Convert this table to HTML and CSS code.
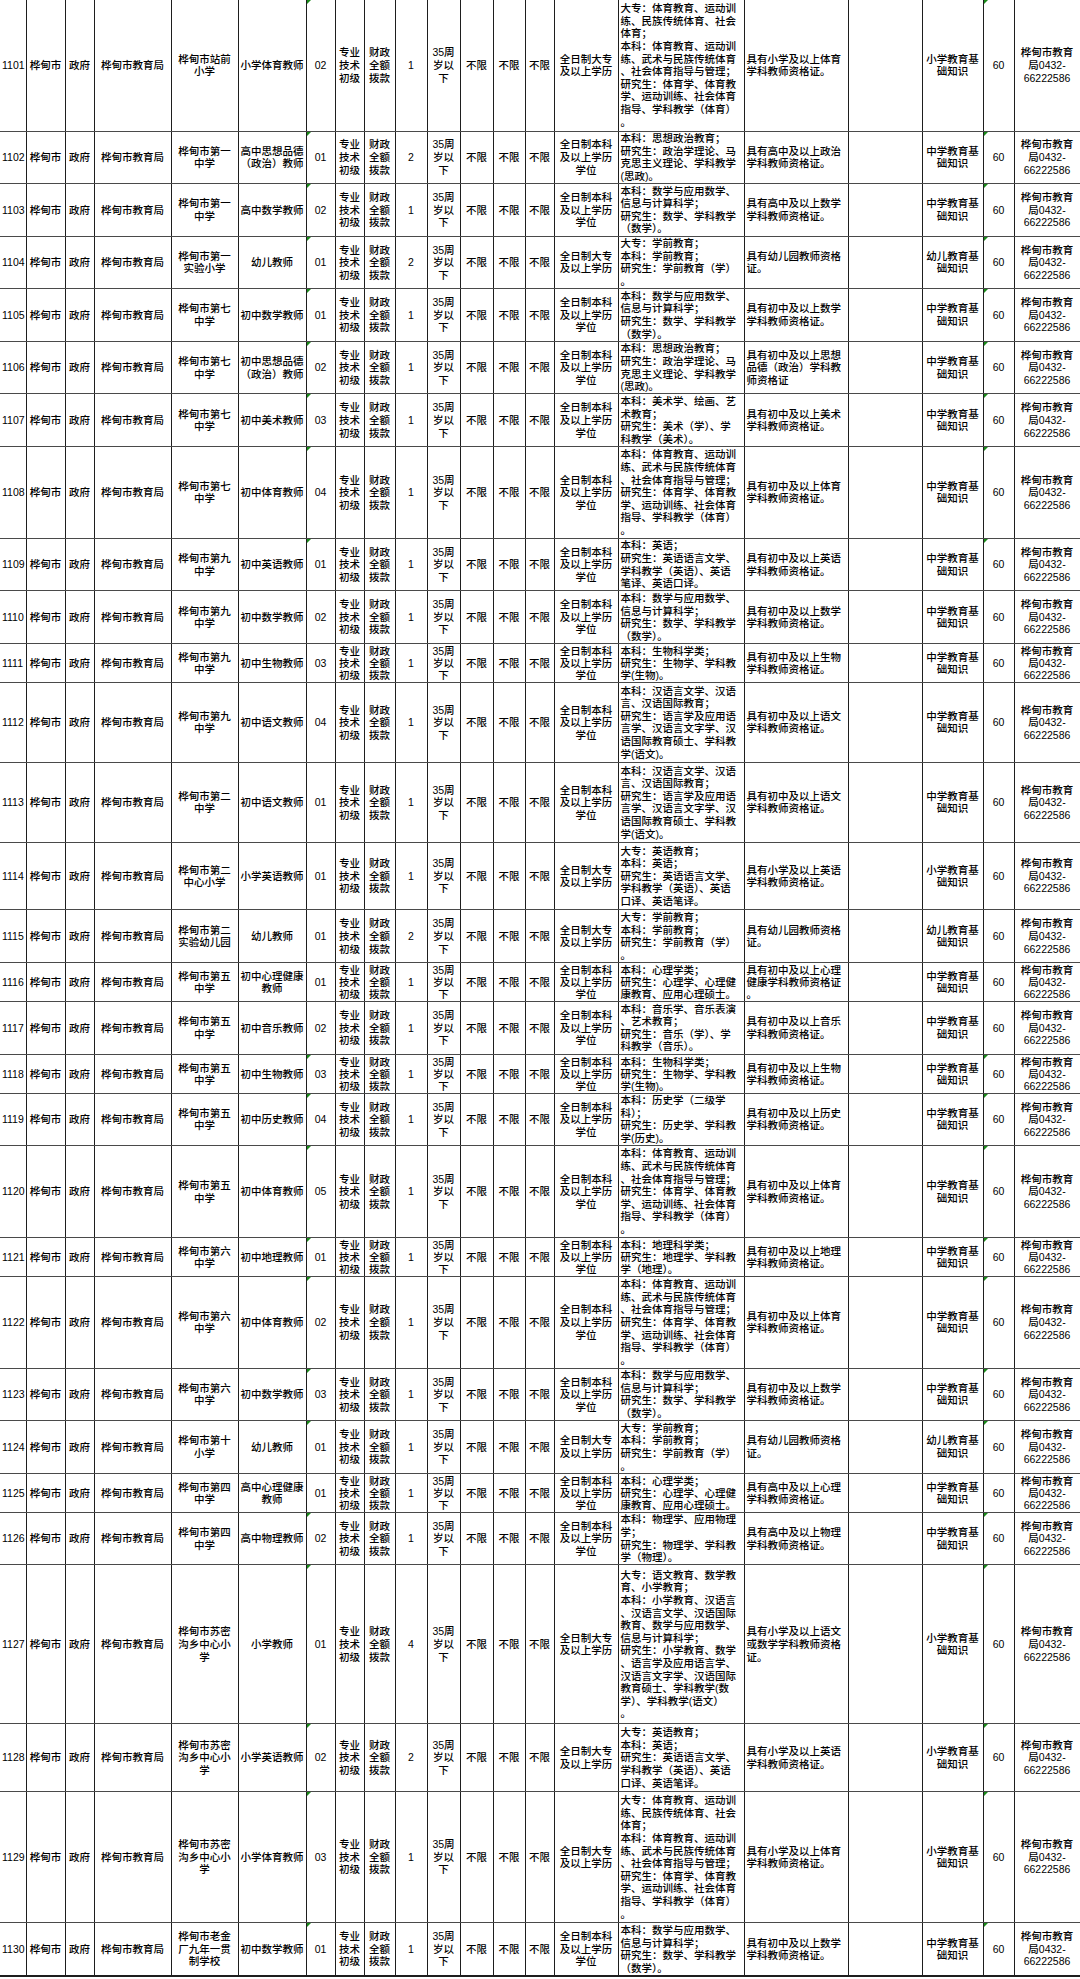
FILE: index.html
```html
<!DOCTYPE html>
<html lang="zh-CN">
<head>
<meta charset="utf-8">
<title>桦甸市教育局招聘岗位</title>
<link rel="stylesheet" href="styles.css">
</head>
<body>
<table class="jobs">
<colgroup>
<col class="w26"><col class="w39"><col class="w29"><col class="w77"><col class="w67"><col class="w68"><col class="w29"><col class="w29"><col class="w31"><col class="w32"><col class="w33"><col class="w33"><col class="w32"><col class="w29"><col class="w64"><col class="w126"><col class="w104"><col class="w74"><col class="w61"><col class="w31"><col class="w66">
</colgroup>
<tbody>
<tr class="r10"><td class="id">1101</td><td>桦甸市</td><td>政府</td><td>桦甸市教育局</td><td>桦甸市站前<br>小学</td><td>小学体育教师</td><td class="g">02</td><td>专业<br>技术<br>初级</td><td>财政<br>全额<br>拨款</td><td>1</td><td>35周<br>岁以<br>下</td><td>不限</td><td>不限</td><td>不限</td><td>全日制大专<br>及以上学历</td><td class="l">大专：体育教育、运动训<br>练、民族传统体育、社会<br>体育；<br>本科：体育教育、运动训<br>练、武术与民族传统体育<br>、社会体育指导与管理；<br>研究生：体育学、体育教<br>学、运动训练、社会体育<br>指导、学科教学（体育）<br>。</td><td class="l">具有小学及以上体育<br>学科教师资格证。</td><td></td><td>小学教育基<br>础知识</td><td class="g">60</td><td>桦甸市教育<br>局0432-<br>66222586</td></tr>
<tr class="r4"><td class="id">1102</td><td>桦甸市</td><td>政府</td><td>桦甸市教育局</td><td>桦甸市第一<br>中学</td><td>高中思想品德<br>（政治）教师</td><td class="g">01</td><td>专业<br>技术<br>初级</td><td>财政<br>全额<br>拨款</td><td>2</td><td>35周<br>岁以<br>下</td><td>不限</td><td>不限</td><td>不限</td><td>全日制本科<br>及以上学历<br>学位</td><td class="l">本科：思想政治教育；<br>研究生：政治学理论、马<br>克思主义理论、学科教学<br>(思政)。</td><td class="l">具有高中及以上政治<br>学科教师资格证。</td><td></td><td>中学教育基<br>础知识</td><td class="g">60</td><td>桦甸市教育<br>局0432-<br>66222586</td></tr>
<tr class="r4"><td class="id">1103</td><td>桦甸市</td><td>政府</td><td>桦甸市教育局</td><td>桦甸市第一<br>中学</td><td>高中数学教师</td><td class="g">02</td><td>专业<br>技术<br>初级</td><td>财政<br>全额<br>拨款</td><td>1</td><td>35周<br>岁以<br>下</td><td>不限</td><td>不限</td><td>不限</td><td>全日制本科<br>及以上学历<br>学位</td><td class="l">本科：数学与应用数学、<br>信息与计算科学；<br>研究生：数学、学科教学<br>（数学）。</td><td class="l">具有高中及以上数学<br>学科教师资格证。</td><td></td><td>中学教育基<br>础知识</td><td class="g">60</td><td>桦甸市教育<br>局0432-<br>66222586</td></tr>
<tr class="r4"><td class="id">1104</td><td>桦甸市</td><td>政府</td><td>桦甸市教育局</td><td>桦甸市第一<br>实验小学</td><td>幼儿教师</td><td class="g">01</td><td>专业<br>技术<br>初级</td><td>财政<br>全额<br>拨款</td><td>2</td><td>35周<br>岁以<br>下</td><td>不限</td><td>不限</td><td>不限</td><td>全日制大专<br>及以上学历</td><td class="l">大专：学前教育；<br>本科：学前教育；<br>研究生：学前教育（学）<br>。</td><td class="l">具有幼儿园教师资格<br>证。</td><td></td><td>幼儿教育基<br>础知识</td><td class="g">60</td><td>桦甸市教育<br>局0432-<br>66222586</td></tr>
<tr class="r4"><td class="id">1105</td><td>桦甸市</td><td>政府</td><td>桦甸市教育局</td><td>桦甸市第七<br>中学</td><td>初中数学教师</td><td class="g">01</td><td>专业<br>技术<br>初级</td><td>财政<br>全额<br>拨款</td><td>1</td><td>35周<br>岁以<br>下</td><td>不限</td><td>不限</td><td>不限</td><td>全日制本科<br>及以上学历<br>学位</td><td class="l">本科：数学与应用数学、<br>信息与计算科学；<br>研究生：数学、学科教学<br>（数学）。</td><td class="l">具有初中及以上数学<br>学科教师资格证。</td><td></td><td>中学教育基<br>础知识</td><td class="g">60</td><td>桦甸市教育<br>局0432-<br>66222586</td></tr>
<tr class="r4"><td class="id">1106</td><td>桦甸市</td><td>政府</td><td>桦甸市教育局</td><td>桦甸市第七<br>中学</td><td>初中思想品德<br>（政治）教师</td><td class="g">02</td><td>专业<br>技术<br>初级</td><td>财政<br>全额<br>拨款</td><td>1</td><td>35周<br>岁以<br>下</td><td>不限</td><td>不限</td><td>不限</td><td>全日制本科<br>及以上学历<br>学位</td><td class="l">本科：思想政治教育；<br>研究生：政治学理论、马<br>克思主义理论、学科教学<br>(思政)。</td><td class="l">具有初中及以上思想<br>品德（政治）学科教<br>师资格证</td><td></td><td>中学教育基<br>础知识</td><td class="g">60</td><td>桦甸市教育<br>局0432-<br>66222586</td></tr>
<tr class="r4"><td class="id">1107</td><td>桦甸市</td><td>政府</td><td>桦甸市教育局</td><td>桦甸市第七<br>中学</td><td>初中美术教师</td><td class="g">03</td><td>专业<br>技术<br>初级</td><td>财政<br>全额<br>拨款</td><td>1</td><td>35周<br>岁以<br>下</td><td>不限</td><td>不限</td><td>不限</td><td>全日制本科<br>及以上学历<br>学位</td><td class="l">本科：美术学、绘画、艺<br>术教育；<br>研究生：美术（学）、学<br>科教学（美术）。</td><td class="l">具有初中及以上美术<br>学科教师资格证。</td><td></td><td>中学教育基<br>础知识</td><td class="g">60</td><td>桦甸市教育<br>局0432-<br>66222586</td></tr>
<tr class="r7"><td class="id">1108</td><td>桦甸市</td><td>政府</td><td>桦甸市教育局</td><td>桦甸市第七<br>中学</td><td>初中体育教师</td><td class="g">04</td><td>专业<br>技术<br>初级</td><td>财政<br>全额<br>拨款</td><td>1</td><td>35周<br>岁以<br>下</td><td>不限</td><td>不限</td><td>不限</td><td>全日制本科<br>及以上学历<br>学位</td><td class="l">本科：体育教育、运动训<br>练、武术与民族传统体育<br>、社会体育指导与管理；<br>研究生：体育学、体育教<br>学、运动训练、社会体育<br>指导、学科教学（体育）<br>。</td><td class="l">具有初中及以上体育<br>学科教师资格证。</td><td></td><td>中学教育基<br>础知识</td><td class="g">60</td><td>桦甸市教育<br>局0432-<br>66222586</td></tr>
<tr class="r4"><td class="id">1109</td><td>桦甸市</td><td>政府</td><td>桦甸市教育局</td><td>桦甸市第九<br>中学</td><td>初中英语教师</td><td class="g">01</td><td>专业<br>技术<br>初级</td><td>财政<br>全额<br>拨款</td><td>1</td><td>35周<br>岁以<br>下</td><td>不限</td><td>不限</td><td>不限</td><td>全日制本科<br>及以上学历<br>学位</td><td class="l">本科：英语；<br>研究生：英语语言文学、<br>学科教学（英语）、英语<br>笔译、英语口译。</td><td class="l">具有初中及以上英语<br>学科教师资格证。</td><td></td><td>中学教育基<br>础知识</td><td class="g">60</td><td>桦甸市教育<br>局0432-<br>66222586</td></tr>
<tr class="r4"><td class="id">1110</td><td>桦甸市</td><td>政府</td><td>桦甸市教育局</td><td>桦甸市第九<br>中学</td><td>初中数学教师</td><td>02</td><td>专业<br>技术<br>初级</td><td>财政<br>全额<br>拨款</td><td>1</td><td>35周<br>岁以<br>下</td><td>不限</td><td>不限</td><td>不限</td><td>全日制本科<br>及以上学历<br>学位</td><td class="l">本科：数学与应用数学、<br>信息与计算科学；<br>研究生：数学、学科教学<br>（数学）。</td><td class="l">具有初中及以上数学<br>学科教师资格证。</td><td></td><td>中学教育基<br>础知识</td><td>60</td><td>桦甸市教育<br>局0432-<br>66222586</td></tr>
<tr class="r3"><td class="id">1111</td><td>桦甸市</td><td>政府</td><td>桦甸市教育局</td><td>桦甸市第九<br>中学</td><td>初中生物教师</td><td>03</td><td>专业<br>技术<br>初级</td><td>财政<br>全额<br>拨款</td><td>1</td><td>35周<br>岁以<br>下</td><td>不限</td><td>不限</td><td>不限</td><td>全日制本科<br>及以上学历<br>学位</td><td class="l">本科：生物科学类；<br>研究生：生物学、学科教<br>学(生物)。</td><td class="l">具有初中及以上生物<br>学科教师资格证。</td><td></td><td>中学教育基<br>础知识</td><td>60</td><td>桦甸市教育<br>局0432-<br>66222586</td></tr>
<tr class="r6"><td class="id">1112</td><td>桦甸市</td><td>政府</td><td>桦甸市教育局</td><td>桦甸市第九<br>中学</td><td>初中语文教师</td><td>04</td><td>专业<br>技术<br>初级</td><td>财政<br>全额<br>拨款</td><td>1</td><td>35周<br>岁以<br>下</td><td>不限</td><td>不限</td><td>不限</td><td>全日制本科<br>及以上学历<br>学位</td><td class="l">本科：汉语言文学、汉语<br>言、汉语国际教育；<br>研究生：语言学及应用语<br>言学、汉语言文字学、汉<br>语国际教育硕士、学科教<br>学(语文)。</td><td class="l">具有初中及以上语文<br>学科教师资格证。</td><td></td><td>中学教育基<br>础知识</td><td>60</td><td>桦甸市教育<br>局0432-<br>66222586</td></tr>
<tr class="r6"><td class="id">1113</td><td>桦甸市</td><td>政府</td><td>桦甸市教育局</td><td>桦甸市第二<br>中学</td><td>初中语文教师</td><td>01</td><td>专业<br>技术<br>初级</td><td>财政<br>全额<br>拨款</td><td>1</td><td>35周<br>岁以<br>下</td><td>不限</td><td>不限</td><td>不限</td><td>全日制本科<br>及以上学历<br>学位</td><td class="l">本科：汉语言文学、汉语<br>言、汉语国际教育；<br>研究生：语言学及应用语<br>言学、汉语言文字学、汉<br>语国际教育硕士、学科教<br>学(语文)。</td><td class="l">具有初中及以上语文<br>学科教师资格证。</td><td></td><td>中学教育基<br>础知识</td><td>60</td><td>桦甸市教育<br>局0432-<br>66222586</td></tr>
<tr class="r5"><td class="id">1114</td><td>桦甸市</td><td>政府</td><td>桦甸市教育局</td><td>桦甸市第二<br>中心小学</td><td>小学英语教师</td><td>01</td><td>专业<br>技术<br>初级</td><td>财政<br>全额<br>拨款</td><td>1</td><td>35周<br>岁以<br>下</td><td>不限</td><td>不限</td><td>不限</td><td>全日制大专<br>及以上学历</td><td class="l">大专：英语教育；<br>本科：英语；<br>研究生：英语语言文学、<br>学科教学（英语）、英语<br>口译、英语笔译。</td><td class="l">具有小学及以上英语<br>学科教师资格证。</td><td></td><td>小学教育基<br>础知识</td><td>60</td><td>桦甸市教育<br>局0432-<br>66222586</td></tr>
<tr class="r4"><td class="id">1115</td><td>桦甸市</td><td>政府</td><td>桦甸市教育局</td><td>桦甸市第二<br>实验幼儿园</td><td>幼儿教师</td><td>01</td><td>专业<br>技术<br>初级</td><td>财政<br>全额<br>拨款</td><td>2</td><td>35周<br>岁以<br>下</td><td>不限</td><td>不限</td><td>不限</td><td>全日制大专<br>及以上学历</td><td class="l">大专：学前教育；<br>本科：学前教育；<br>研究生：学前教育（学）<br>。</td><td class="l">具有幼儿园教师资格<br>证。</td><td></td><td>幼儿教育基<br>础知识</td><td>60</td><td>桦甸市教育<br>局0432-<br>66222586</td></tr>
<tr class="r3"><td class="id">1116</td><td>桦甸市</td><td>政府</td><td>桦甸市教育局</td><td>桦甸市第五<br>中学</td><td>初中心理健康<br>教师</td><td>01</td><td>专业<br>技术<br>初级</td><td>财政<br>全额<br>拨款</td><td>1</td><td>35周<br>岁以<br>下</td><td>不限</td><td>不限</td><td>不限</td><td>全日制本科<br>及以上学历<br>学位</td><td class="l">本科：心理学类；<br>研究生：心理学、心理健<br>康教育、应用心理硕士。</td><td class="l">具有初中及以上心理<br>健康学科教师资格证<br>。</td><td></td><td>中学教育基<br>础知识</td><td>60</td><td>桦甸市教育<br>局0432-<br>66222586</td></tr>
<tr class="r4"><td class="id">1117</td><td>桦甸市</td><td>政府</td><td>桦甸市教育局</td><td>桦甸市第五<br>中学</td><td>初中音乐教师</td><td>02</td><td>专业<br>技术<br>初级</td><td>财政<br>全额<br>拨款</td><td>1</td><td>35周<br>岁以<br>下</td><td>不限</td><td>不限</td><td>不限</td><td>全日制本科<br>及以上学历<br>学位</td><td class="l">本科：音乐学、音乐表演<br>、艺术教育；<br>研究生：音乐（学）、学<br>科教学（音乐）。</td><td class="l">具有初中及以上音乐<br>学科教师资格证。</td><td></td><td>中学教育基<br>础知识</td><td>60</td><td>桦甸市教育<br>局0432-<br>66222586</td></tr>
<tr class="r3"><td class="id">1118</td><td>桦甸市</td><td>政府</td><td>桦甸市教育局</td><td>桦甸市第五<br>中学</td><td>初中生物教师</td><td class="g">03</td><td>专业<br>技术<br>初级</td><td>财政<br>全额<br>拨款</td><td>1</td><td>35周<br>岁以<br>下</td><td>不限</td><td>不限</td><td>不限</td><td>全日制本科<br>及以上学历<br>学位</td><td class="l">本科：生物科学类；<br>研究生：生物学、学科教<br>学(生物)。</td><td class="l">具有初中及以上生物<br>学科教师资格证。</td><td></td><td>中学教育基<br>础知识</td><td class="g">60</td><td>桦甸市教育<br>局0432-<br>66222586</td></tr>
<tr class="r4"><td class="id">1119</td><td>桦甸市</td><td>政府</td><td>桦甸市教育局</td><td>桦甸市第五<br>中学</td><td>初中历史教师</td><td class="g">04</td><td>专业<br>技术<br>初级</td><td>财政<br>全额<br>拨款</td><td>1</td><td>35周<br>岁以<br>下</td><td>不限</td><td>不限</td><td>不限</td><td>全日制本科<br>及以上学历<br>学位</td><td class="l">本科：历史学（二级学<br>科）；<br>研究生：历史学、学科教<br>学(历史)。</td><td class="l">具有初中及以上历史<br>学科教师资格证。</td><td></td><td>中学教育基<br>础知识</td><td class="g">60</td><td>桦甸市教育<br>局0432-<br>66222586</td></tr>
<tr class="r7"><td class="id">1120</td><td>桦甸市</td><td>政府</td><td>桦甸市教育局</td><td>桦甸市第五<br>中学</td><td>初中体育教师</td><td class="g">05</td><td>专业<br>技术<br>初级</td><td>财政<br>全额<br>拨款</td><td>1</td><td>35周<br>岁以<br>下</td><td>不限</td><td>不限</td><td>不限</td><td>全日制本科<br>及以上学历<br>学位</td><td class="l">本科：体育教育、运动训<br>练、武术与民族传统体育<br>、社会体育指导与管理；<br>研究生：体育学、体育教<br>学、运动训练、社会体育<br>指导、学科教学（体育）<br>。</td><td class="l">具有初中及以上体育<br>学科教师资格证。</td><td></td><td>中学教育基<br>础知识</td><td class="g">60</td><td>桦甸市教育<br>局0432-<br>66222586</td></tr>
<tr class="r3"><td class="id">1121</td><td>桦甸市</td><td>政府</td><td>桦甸市教育局</td><td>桦甸市第六<br>中学</td><td>初中地理教师</td><td class="g">01</td><td>专业<br>技术<br>初级</td><td>财政<br>全额<br>拨款</td><td>1</td><td>35周<br>岁以<br>下</td><td>不限</td><td>不限</td><td>不限</td><td>全日制本科<br>及以上学历<br>学位</td><td class="l">本科：地理科学类；<br>研究生：地理学、学科教<br>学（地理）。</td><td class="l">具有初中及以上地理<br>学科教师资格证。</td><td></td><td>中学教育基<br>础知识</td><td class="g">60</td><td>桦甸市教育<br>局0432-<br>66222586</td></tr>
<tr class="r7"><td class="id">1122</td><td>桦甸市</td><td>政府</td><td>桦甸市教育局</td><td>桦甸市第六<br>中学</td><td>初中体育教师</td><td class="g">02</td><td>专业<br>技术<br>初级</td><td>财政<br>全额<br>拨款</td><td>1</td><td>35周<br>岁以<br>下</td><td>不限</td><td>不限</td><td>不限</td><td>全日制本科<br>及以上学历<br>学位</td><td class="l">本科：体育教育、运动训<br>练、武术与民族传统体育<br>、社会体育指导与管理；<br>研究生：体育学、体育教<br>学、运动训练、社会体育<br>指导、学科教学（体育）<br>。</td><td class="l">具有初中及以上体育<br>学科教师资格证。</td><td></td><td>中学教育基<br>础知识</td><td class="g">60</td><td>桦甸市教育<br>局0432-<br>66222586</td></tr>
<tr class="r4"><td class="id">1123</td><td>桦甸市</td><td>政府</td><td>桦甸市教育局</td><td>桦甸市第六<br>中学</td><td>初中数学教师</td><td class="g">03</td><td>专业<br>技术<br>初级</td><td>财政<br>全额<br>拨款</td><td>1</td><td>35周<br>岁以<br>下</td><td>不限</td><td>不限</td><td>不限</td><td>全日制本科<br>及以上学历<br>学位</td><td class="l">本科：数学与应用数学、<br>信息与计算科学；<br>研究生：数学、学科教学<br>（数学）。</td><td class="l">具有初中及以上数学<br>学科教师资格证。</td><td></td><td>中学教育基<br>础知识</td><td class="g">60</td><td>桦甸市教育<br>局0432-<br>66222586</td></tr>
<tr class="r4"><td class="id">1124</td><td>桦甸市</td><td>政府</td><td>桦甸市教育局</td><td>桦甸市第十<br>小学</td><td>幼儿教师</td><td class="g">01</td><td>专业<br>技术<br>初级</td><td>财政<br>全额<br>拨款</td><td>1</td><td>35周<br>岁以<br>下</td><td>不限</td><td>不限</td><td>不限</td><td>全日制大专<br>及以上学历</td><td class="l">大专：学前教育；<br>本科：学前教育；<br>研究生：学前教育（学）<br>。</td><td class="l">具有幼儿园教师资格<br>证。</td><td></td><td>幼儿教育基<br>础知识</td><td class="g">60</td><td>桦甸市教育<br>局0432-<br>66222586</td></tr>
<tr class="r3"><td class="id">1125</td><td>桦甸市</td><td>政府</td><td>桦甸市教育局</td><td>桦甸市第四<br>中学</td><td>高中心理健康<br>教师</td><td>01</td><td>专业<br>技术<br>初级</td><td>财政<br>全额<br>拨款</td><td>1</td><td>35周<br>岁以<br>下</td><td>不限</td><td>不限</td><td>不限</td><td>全日制本科<br>及以上学历<br>学位</td><td class="l">本科：心理学类；<br>研究生：心理学、心理健<br>康教育、应用心理硕士。</td><td class="l">具有高中及以上心理<br>学科教师资格证。</td><td></td><td>中学教育基<br>础知识</td><td>60</td><td>桦甸市教育<br>局0432-<br>66222586</td></tr>
<tr class="r4"><td class="id">1126</td><td>桦甸市</td><td>政府</td><td>桦甸市教育局</td><td>桦甸市第四<br>中学</td><td>高中物理教师</td><td class="g">02</td><td>专业<br>技术<br>初级</td><td>财政<br>全额<br>拨款</td><td>1</td><td>35周<br>岁以<br>下</td><td>不限</td><td>不限</td><td>不限</td><td>全日制本科<br>及以上学历<br>学位</td><td class="l">本科：物理学、应用物理<br>学；<br>研究生：物理学、学科教<br>学（物理）。</td><td class="l">具有高中及以上物理<br>学科教师资格证。</td><td></td><td>中学教育基<br>础知识</td><td class="g">60</td><td>桦甸市教育<br>局0432-<br>66222586</td></tr>
<tr class="r12"><td class="id">1127</td><td>桦甸市</td><td>政府</td><td>桦甸市教育局</td><td>桦甸市苏密<br>沟乡中心小<br>学</td><td>小学教师</td><td class="g">01</td><td>专业<br>技术<br>初级</td><td>财政<br>全额<br>拨款</td><td>4</td><td>35周<br>岁以<br>下</td><td>不限</td><td>不限</td><td>不限</td><td>全日制大专<br>及以上学历</td><td class="l">大专：语文教育、数学教<br>育、小学教育；<br>本科：小学教育、汉语言<br>、汉语言文学、汉语国际<br>教育、数学与应用数学、<br>信息与计算科学；<br>研究生：小学教育、数学<br>、语言学及应用语言学、<br>汉语言文字学、汉语国际<br>教育硕士、学科教学(数<br>学）、学科教学(语文）<br>。</td><td class="l">具有小学及以上语文<br>或数学学科教师资格<br>证。</td><td></td><td>小学教育基<br>础知识</td><td class="g">60</td><td>桦甸市教育<br>局0432-<br>66222586</td></tr>
<tr class="r5"><td class="id">1128</td><td>桦甸市</td><td>政府</td><td>桦甸市教育局</td><td>桦甸市苏密<br>沟乡中心小<br>学</td><td>小学英语教师</td><td class="g">02</td><td>专业<br>技术<br>初级</td><td>财政<br>全额<br>拨款</td><td>2</td><td>35周<br>岁以<br>下</td><td>不限</td><td>不限</td><td>不限</td><td>全日制大专<br>及以上学历</td><td class="l">大专：英语教育；<br>本科：英语；<br>研究生：英语语言文学、<br>学科教学（英语）、英语<br>口译、英语笔译。</td><td class="l">具有小学及以上英语<br>学科教师资格证。</td><td></td><td>小学教育基<br>础知识</td><td class="g">60</td><td>桦甸市教育<br>局0432-<br>66222586</td></tr>
<tr class="r10"><td class="id">1129</td><td>桦甸市</td><td>政府</td><td>桦甸市教育局</td><td>桦甸市苏密<br>沟乡中心小<br>学</td><td>小学体育教师</td><td class="g">03</td><td>专业<br>技术<br>初级</td><td>财政<br>全额<br>拨款</td><td>1</td><td>35周<br>岁以<br>下</td><td>不限</td><td>不限</td><td>不限</td><td>全日制大专<br>及以上学历</td><td class="l">大专：体育教育、运动训<br>练、民族传统体育、社会<br>体育；<br>本科：体育教育、运动训<br>练、武术与民族传统体育<br>、社会体育指导与管理；<br>研究生：体育学、体育教<br>学、运动训练、社会体育<br>指导、学科教学（体育）<br>。</td><td class="l">具有小学及以上体育<br>学科教师资格证。</td><td></td><td>小学教育基<br>础知识</td><td class="g">60</td><td>桦甸市教育<br>局0432-<br>66222586</td></tr>
<tr class="r4 last"><td class="id">1130</td><td>桦甸市</td><td>政府</td><td>桦甸市教育局</td><td>桦甸市老金<br>厂九年一贯<br>制学校</td><td>初中数学教师</td><td class="g">01</td><td>专业<br>技术<br>初级</td><td>财政<br>全额<br>拨款</td><td>1</td><td>35周<br>岁以<br>下</td><td>不限</td><td>不限</td><td>不限</td><td>全日制本科<br>及以上学历<br>学位</td><td class="l">本科：数学与应用数学、<br>信息与计算科学；<br>研究生：数学、学科教学<br>（数学）。</td><td class="l">具有初中及以上数学<br>学科教师资格证。</td><td></td><td>中学教育基<br>础知识</td><td class="g">60</td><td>桦甸市教育<br>局0432-<br>66222586</td></tr>
</tbody>
</table>
</body>
</html>
```

FILE: styles.css
```css
html, body {
  margin: 0;
  padding: 0;
  background: #ffffff;
}

.jobs {
  width: 1080px;
  table-layout: fixed;
  border-collapse: collapse;
  font-family: "Liberation Sans", "Noto Sans CJK SC", sans-serif;
  font-size: 10.5px;
  font-weight: 500;
  line-height: 12.6px;
  color: #000;
}

.w26 { width: 26px; }
.w29 { width: 29px; }
.w31 { width: 31px; }
.w32 { width: 32px; }
.w33 { width: 33px; }
.w39 { width: 39px; }
.w61 { width: 61px; }
.w64 { width: 64px; }
.w66 { width: 66px; }
.w67 { width: 67px; }
.w68 { width: 68px; }
.w74 { width: 74px; }
.w77 { width: 77px; }
.w104 { width: 104px; }
.w126 { width: 126px; }

.jobs td {
  padding: 0 1px;
  text-align: center;
  vertical-align: middle;
  white-space: nowrap;
  overflow: hidden;
  border-left: 1px solid #1e1e1e;
  border-right: 1px solid #1e1e1e;
  border-bottom: 1px solid #4a4a4a;
  position: relative;
}

.jobs td:first-child {
  border-left: none;
  padding-left: 2px;
  text-align: left;
}

.jobs td.l {
  text-align: left;
  padding-left: 2px;
}

.jobs tr.last td {
  border-bottom: 2px solid #1e1e1e;
}

.r3 td { height: 38px; line-height: 12px; }
.r4 td { height: 51.6px; }
.r5 td { height: 66.5px; }
.r6 td { height: 79px; }
.r7 td { height: 90.7px; }
.r10 td { height: 130.5px; }
.r12 td { height: 158px; }

.jobs td.g::before {
  content: "";
  position: absolute;
  top: 0;
  left: 0;
  border-top: 4px solid #1a8a1a;
  border-right: 4px solid transparent;
}
```
